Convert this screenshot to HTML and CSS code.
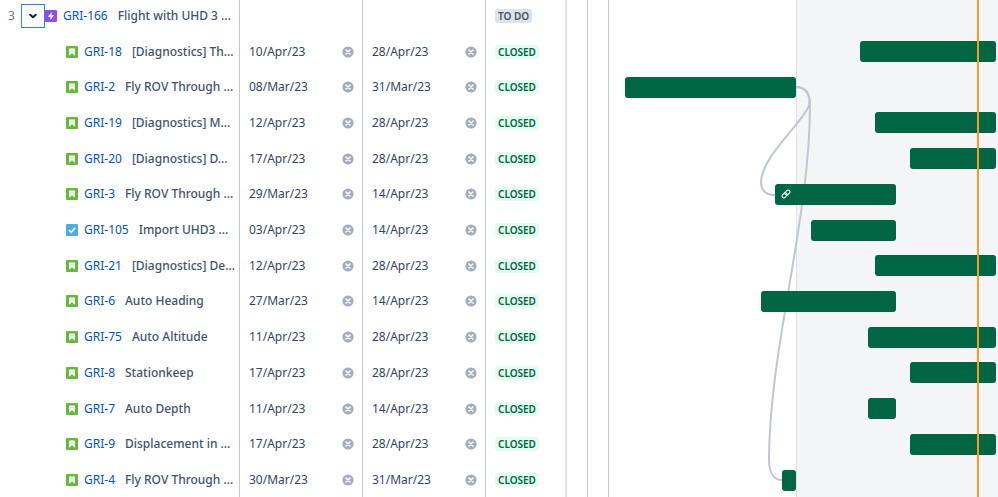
FILE: index.html
```html
<!DOCTYPE html>
<html lang="en">
<head>
<meta charset="utf-8">
<title>GRI plan</title>
<link rel="stylesheet" href="styles.css">
</head>
<body>
<svg class="defs" aria-hidden="true">
  <symbol id="story" viewBox="0 0 12 12"><rect width="12" height="12" rx="1" fill="#63ba3c"/><path d="M3 2.500h6v7.300L6 7.300 3 9.800z" fill="#fff"/><path d="M4.800 4v3M7.200 4v3M4.500 4.200h3" stroke="#63ba3c" stroke-width="0.500" opacity="0.500"/></symbol>
  <symbol id="task" viewBox="0 0 12 12"><rect width="12" height="12" rx="1" fill="#4bade8"/><path d="M3 6.200 5.200 8.300 9.200 3.700" fill="none" stroke="#fff" stroke-width="1.700"/></symbol>
  <symbol id="epic" viewBox="0 0 12 12"><rect width="12" height="12" rx="1" fill="#904ee2"/><path d="M6.600 2 3 6.800h2.500L5.400 10 9 5.200H6.500z" fill="#fff"/></symbol>
  <symbol id="clear" viewBox="0 0 12 12"><circle cx="6" cy="6" r="5.600" fill="#a5adba"/><path d="M4 4l4 4M8 4l-4 4" stroke="#fff" stroke-width="1.600" stroke-linecap="round"/></symbol>
</svg>
<main class="plan">
  <table class="issues">
    <colgroup><col class="col-name"><col class="col-date"><col class="col-date"><col></colgroup>
    <tbody>
      <tr><td><div class="name top"><span class="rank">3</span><button class="toggle" aria-label="Collapse" aria-expanded="true"><svg viewBox="0 0 10 10"><path d="M2.200 3.700 5 6.300 7.800 3.700" fill="none" stroke="#091e42" stroke-width="2" stroke-linecap="round" stroke-linejoin="round"/></svg></button><svg class="type"><use href="#epic"/></svg><a href="#GRI-166">GRI-166</a><span class="summary">Flight with UHD 3 ...</span></div></td><td></td><td></td><td><span class="status todo">TO DO</span></td></tr>
      <tr><td><div class="name"><svg class="type"><use href="#story"/></svg><a href="#GRI-18">GRI-18</a><span class="summary">[Diagnostics] Th...</span></div></td><td><div class="date">10/Apr/23<button aria-label="Clear"><svg><use href="#clear"/></svg></button></div></td><td><div class="date">28/Apr/23<button aria-label="Clear"><svg><use href="#clear"/></svg></button></div></td><td><span class="status">CLOSED</span></td></tr>
      <tr><td><div class="name"><svg class="type"><use href="#story"/></svg><a href="#GRI-2">GRI-2</a><span class="summary">Fly ROV Through ...</span></div></td><td><div class="date">08/Mar/23<button aria-label="Clear"><svg><use href="#clear"/></svg></button></div></td><td><div class="date">31/Mar/23<button aria-label="Clear"><svg><use href="#clear"/></svg></button></div></td><td><span class="status">CLOSED</span></td></tr>
      <tr><td><div class="name"><svg class="type"><use href="#story"/></svg><a href="#GRI-19">GRI-19</a><span class="summary">[Diagnostics] M...</span></div></td><td><div class="date">12/Apr/23<button aria-label="Clear"><svg><use href="#clear"/></svg></button></div></td><td><div class="date">28/Apr/23<button aria-label="Clear"><svg><use href="#clear"/></svg></button></div></td><td><span class="status">CLOSED</span></td></tr>
      <tr><td><div class="name"><svg class="type"><use href="#story"/></svg><a href="#GRI-20">GRI-20</a><span class="summary">[Diagnostics] D...</span></div></td><td><div class="date">17/Apr/23<button aria-label="Clear"><svg><use href="#clear"/></svg></button></div></td><td><div class="date">28/Apr/23<button aria-label="Clear"><svg><use href="#clear"/></svg></button></div></td><td><span class="status">CLOSED</span></td></tr>
      <tr><td><div class="name"><svg class="type"><use href="#story"/></svg><a href="#GRI-3">GRI-3</a><span class="summary">Fly ROV Through ...</span></div></td><td><div class="date">29/Mar/23<button aria-label="Clear"><svg><use href="#clear"/></svg></button></div></td><td><div class="date">14/Apr/23<button aria-label="Clear"><svg><use href="#clear"/></svg></button></div></td><td><span class="status">CLOSED</span></td></tr>
      <tr><td><div class="name"><svg class="type"><use href="#task"/></svg><a href="#GRI-105">GRI-105</a><span class="summary">Import UHD3 ...</span></div></td><td><div class="date">03/Apr/23<button aria-label="Clear"><svg><use href="#clear"/></svg></button></div></td><td><div class="date">14/Apr/23<button aria-label="Clear"><svg><use href="#clear"/></svg></button></div></td><td><span class="status">CLOSED</span></td></tr>
      <tr><td><div class="name"><svg class="type"><use href="#story"/></svg><a href="#GRI-21">GRI-21</a><span class="summary">[Diagnostics] De...</span></div></td><td><div class="date">12/Apr/23<button aria-label="Clear"><svg><use href="#clear"/></svg></button></div></td><td><div class="date">28/Apr/23<button aria-label="Clear"><svg><use href="#clear"/></svg></button></div></td><td><span class="status">CLOSED</span></td></tr>
      <tr><td><div class="name"><svg class="type"><use href="#story"/></svg><a href="#GRI-6">GRI-6</a><span class="summary">Auto Heading</span></div></td><td><div class="date">27/Mar/23<button aria-label="Clear"><svg><use href="#clear"/></svg></button></div></td><td><div class="date">14/Apr/23<button aria-label="Clear"><svg><use href="#clear"/></svg></button></div></td><td><span class="status">CLOSED</span></td></tr>
      <tr><td><div class="name"><svg class="type"><use href="#story"/></svg><a href="#GRI-75">GRI-75</a><span class="summary">Auto Altitude</span></div></td><td><div class="date">11/Apr/23<button aria-label="Clear"><svg><use href="#clear"/></svg></button></div></td><td><div class="date">28/Apr/23<button aria-label="Clear"><svg><use href="#clear"/></svg></button></div></td><td><span class="status">CLOSED</span></td></tr>
      <tr><td><div class="name"><svg class="type"><use href="#story"/></svg><a href="#GRI-8">GRI-8</a><span class="summary">Stationkeep</span></div></td><td><div class="date">17/Apr/23<button aria-label="Clear"><svg><use href="#clear"/></svg></button></div></td><td><div class="date">28/Apr/23<button aria-label="Clear"><svg><use href="#clear"/></svg></button></div></td><td><span class="status">CLOSED</span></td></tr>
      <tr><td><div class="name"><svg class="type"><use href="#story"/></svg><a href="#GRI-7">GRI-7</a><span class="summary">Auto Depth</span></div></td><td><div class="date">11/Apr/23<button aria-label="Clear"><svg><use href="#clear"/></svg></button></div></td><td><div class="date">14/Apr/23<button aria-label="Clear"><svg><use href="#clear"/></svg></button></div></td><td><span class="status">CLOSED</span></td></tr>
      <tr><td><div class="name"><svg class="type"><use href="#story"/></svg><a href="#GRI-9">GRI-9</a><span class="summary">Displacement in ...</span></div></td><td><div class="date">17/Apr/23<button aria-label="Clear"><svg><use href="#clear"/></svg></button></div></td><td><div class="date">28/Apr/23<button aria-label="Clear"><svg><use href="#clear"/></svg></button></div></td><td><span class="status">CLOSED</span></td></tr>
      <tr><td><div class="name"><svg class="type"><use href="#story"/></svg><a href="#GRI-4">GRI-4</a><span class="summary">Fly ROV Through ...</span></div></td><td><div class="date">30/Mar/23<button aria-label="Clear"><svg><use href="#clear"/></svg></button></div></td><td><div class="date">31/Mar/23<button aria-label="Clear"><svg><use href="#clear"/></svg></button></div></td><td><span class="status">CLOSED</span></td></tr>
    </tbody>
  </table>
  <div class="gutter"></div>
  <div class="gutter"></div>
  <!-- One grid column per day, 8 March to 28 April; one grid row per issue -->
  <section class="timeline">
    <div class="april"></div>
    <svg class="links" viewBox="0 0 371 500" preserveAspectRatio="none" aria-hidden="true">
      <path d="M171 89C181 89 186 98 184 107C180 123 137 157 136 184C136 193 142 197 150 197"/>
      <path d="M171 89C181 89 185 95 185 107C185 222 144 352 144 462C144 475 149 482 157 482"/>
    </svg>
    <div class="bar" style="grid-area: 2 / 34 / 3 / 53"></div>
    <div class="bar" style="grid-area: 3 / 1 / 4 / 25"></div>
    <div class="bar" style="grid-area: 4 / 36 / 5 / 53"></div>
    <div class="bar" style="grid-area: 5 / 41 / 6 / 53"></div>
    <div class="bar" style="grid-area: 6 / 22 / 7 / 39"><svg viewBox="0 0 10 10"><g transform="rotate(-45 5 5)" fill="none" stroke="#fff"><rect x="0.200" y="3.200" width="5.600" height="3.600" rx="1.800"/><rect x="4.200" y="3.200" width="5.600" height="3.600" rx="1.800"/></g></svg></div>
    <div class="bar" style="grid-area: 7 / 27 / 8 / 39"></div>
    <div class="bar" style="grid-area: 8 / 36 / 9 / 53"></div>
    <div class="bar" style="grid-area: 9 / 20 / 10 / 39"></div>
    <div class="bar" style="grid-area: 10 / 35 / 11 / 53"></div>
    <div class="bar" style="grid-area: 11 / 41 / 12 / 53"></div>
    <div class="bar" style="grid-area: 12 / 35 / 13 / 39"></div>
    <div class="bar" style="grid-area: 13 / 41 / 14 / 53"></div>
    <div class="bar" style="grid-area: 14 / 23 / 15 / 25"></div>
    <div class="today"></div>
  </section>
</main>
</body>
</html>
```
FILE: styles.css
```css
* { box-sizing: border-box; }

body {
  margin: 0;
  height: 100vh;
  overflow: hidden;
  background: #fff;
  color: #42526e;
  font: 12px/20px "Noto Sans", "Open Sans", sans-serif;
}

.defs { display: none; }

svg { display: block; flex: none; }

button {
  display: flex;
  align-items: center;
  justify-content: center;
  padding: 0;
  border: 0;
  background: none;
}

/* The list is scrolled slightly, so it runs past both window edges */
.plan {
  display: flex;
  height: calc(100vh + 3px);
  margin-top: -2px;
}

.issues {
  flex: none;
  width: 567px;
  height: 100%;
  table-layout: fixed;
  border-collapse: separate;
  border-spacing: 0;
  border-right: 2px solid #dfe1e6;
}

.col-name { width: 240px; }
.col-date { width: 123px; }

tr { height: 32px; }

td {
  padding: 0 8px 0 9px;
  border-right: 1px solid #c1c7d0;
  vertical-align: middle;
  white-space: nowrap;
}

td:first-child { padding: 0; }
td:last-child { border-right: 0; }

.name {
  display: flex;
  align-items: center;
  padding-left: 66px;
}

.name.top { padding-left: 8px; }

.rank { width: 13px; color: #6b778c; }

.toggle {
  width: 24px;
  height: 24px;
  border: 1px solid #2684ff;
}

.toggle svg { width: 10px; height: 10px; }

.type {
  width: 12px;
  height: 12px;
  margin-right: 6px;
}

a { color: #0052cc; text-decoration: none; }

.summary {
  margin-left: 10px;
  font-weight: 500;
}

.date {
  display: flex;
  align-items: center;
  justify-content: space-between;
  color: #344563;
}

.date svg { width: 12px; height: 12px; }

.status {
  display: block;
  width: fit-content;
  padding: 0 3px;
  border-radius: 3px;
  background: #e3fcef;
  color: #006644;
  font-size: 10px;
  font-weight: 600;
  line-height: 14px;
}

.status.todo { background: #dfe1e6; color: #42526e; }

.gutter {
  flex: none;
  width: 21px;
  border-right: 1px solid #c1c7d0;
}

.timeline {
  position: relative;
  flex: 1;
  display: grid;
  grid-template-columns: repeat(52, minmax(0, 1fr));
  grid-template-rows: repeat(14, minmax(0, 1fr));
  padding: 0 2px 0 16px;
}

.april {
  grid-area: 1 / 25 / -1 / -1;
  margin-right: -2px;
  border-left: 1px solid #dfe1e6;
  background: #f4f5f7;
}

.links {
  grid-area: 1 / 1 / -1 / -1;
  width: 100%;
  height: 100%;
  fill: none;
  stroke: #c1c7d0;
  stroke-width: 2;
}

.bar {
  display: flex;
  align-items: center;
  align-self: center;
  height: 21px;
  padding-left: 6px;
  border-radius: 3px;
  background: #006644;
}

.bar svg { width: 10px; height: 10px; }

.today {
  grid-area: 1 / 50 / -1 / 51;
  justify-self: center;
  width: 2px;
  background: #ff991f;
}
```
